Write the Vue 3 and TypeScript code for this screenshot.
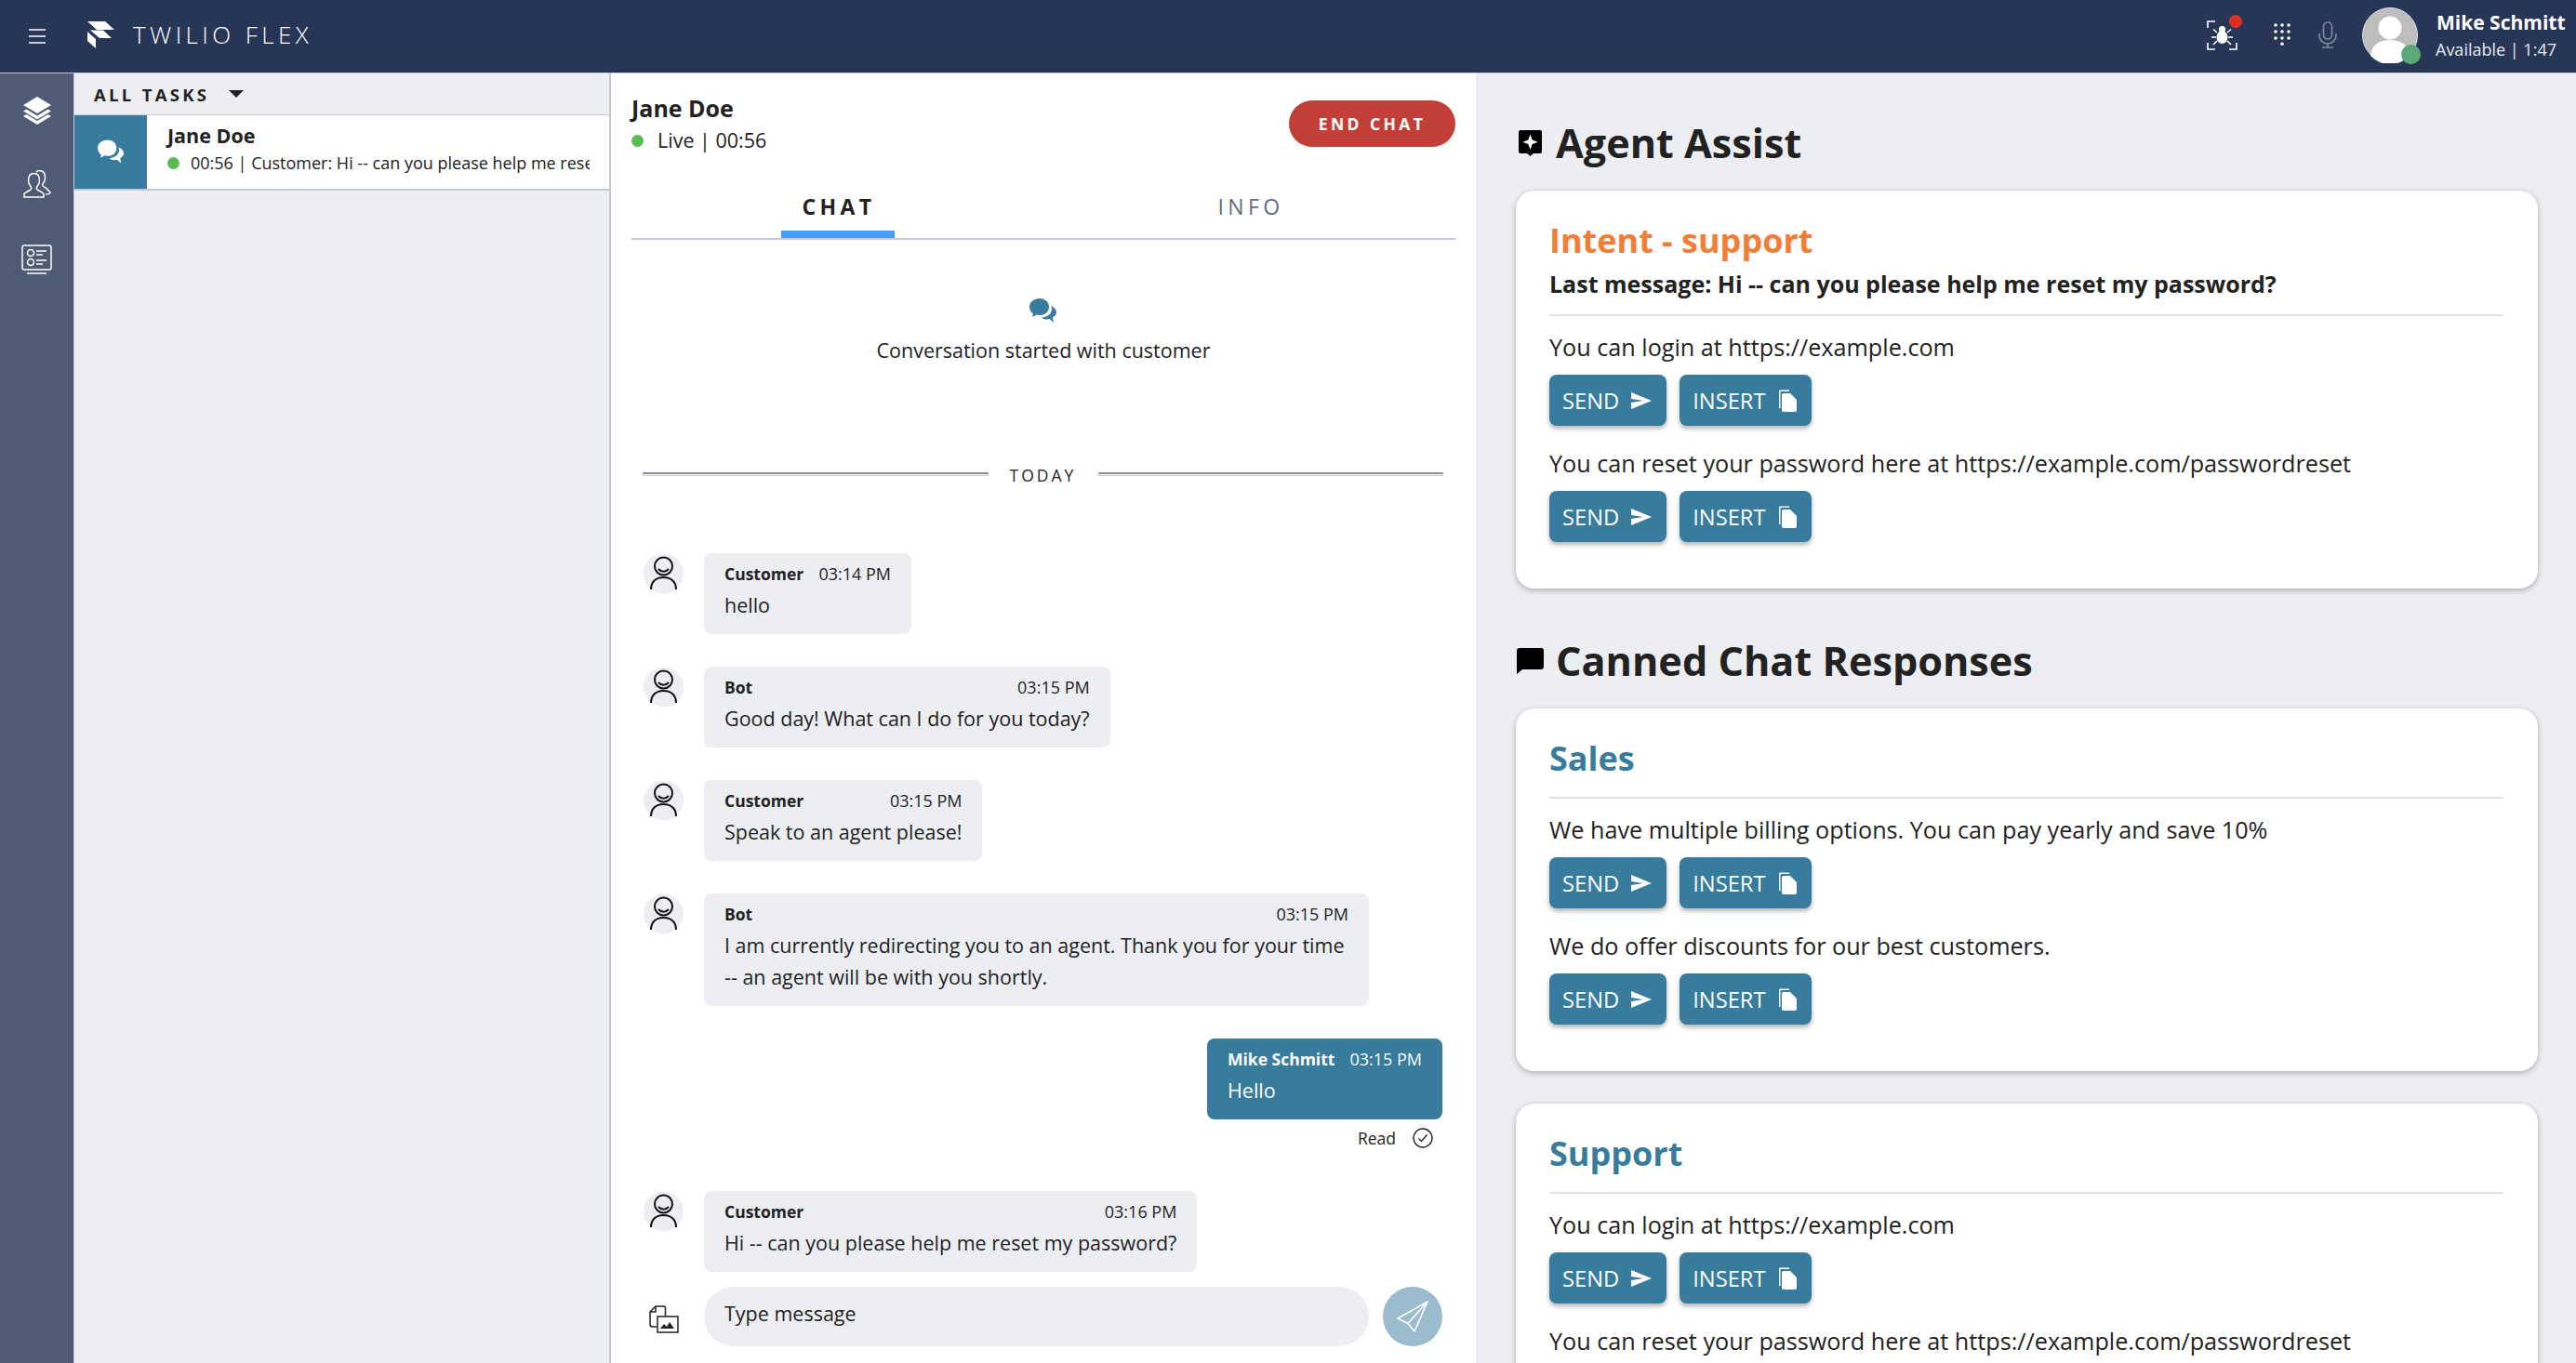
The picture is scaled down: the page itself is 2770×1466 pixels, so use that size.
<script setup lang="ts">
interface Msg { who: string; time: string; lines: string[]; gap: number; wide?: number }
interface Section { title: string; intent?: boolean; last?: string; items: string[] }

const messages: Msg[] = [
  { who: 'Customer', time: '03:14 PM', lines: ['hello'], gap: 0, wide: 223 },
  { who: 'Bot', time: '03:15 PM', lines: ['Good day! What can I do for you today?'], gap: 35 },
  { who: 'Customer', time: '03:15 PM', lines: ['Speak to an agent please!'], gap: 35 },
  { who: 'Bot', time: '03:15 PM', lines: ['I am currently redirecting you to an agent. Thank you for your time', '-- an agent will be with you shortly.'], gap: 35, wide: 715 },
]

const assist: Section[] = [
  {
    title: 'Intent - support',
    intent: true,
    last: 'Last message: Hi -- can you please help me reset my password?',
    items: ['You can login at https://example.com', 'You can reset your password here at https://example.com/passwordreset'],
  },
]
const canned: Section[] = [
  { title: 'Sales', items: ['We have multiple billing options. You can pay yearly and save 10%', 'We do offer discounts for our best customers.'] },
  { title: 'Support', items: ['You can login at https://example.com', 'You can reset your password here at https://example.com/passwordreset'] },
]
const groups = [
  { name: 'Agent Assist', icon: 'assist', sections: assist },
  { name: 'Canned Chat Responses', icon: 'canned', sections: canned },
]
</script>

<template>
  <div class="app">
    <header class="topbar">
      <svg class="burger" viewBox="0 0 18 16" width="18" height="16"><path d="M0 1h18M0 8h18M0 15h18" stroke="#fff" stroke-width="1.6" /></svg>
      <svg class="logo" viewBox="0 0 29 29" width="29" height="29">
        <path d="M0 0h19l10 9H12l-2 0z M3 9.5h14l9 8.5H13z M0 11l9 8v10l-9-8z" fill="#fff" />
      </svg>
      <span class="brand">TWILIO FLEX</span>
      <div class="spacer"></div>
      <div class="bug">
        <svg viewBox="0 0 33 32" width="33" height="32">
          <path d="M1 8V1h8M24 1h8v7M1 24v7h8M24 31h8v-7" fill="none" stroke="#fff" stroke-width="1.6" />
          <circle cx="16.5" cy="9.5" r="3.6" fill="#fff" />
          <ellipse cx="16.5" cy="18" rx="6" ry="7" fill="#fff" />
          <path d="M11 13L7 9.5M22 13l4-3.500M10 18H5M23 18h5M11 22l-4 4M22 22l4 4" stroke="#fff" stroke-width="1.6" fill="none" />
        </svg>
        <span class="bug-dot"></span>
      </div>
      <svg class="dial" viewBox="0 0 18 24" width="18" height="24" fill="#fff">
        <circle cx="2" cy="2" r="1.800" /><circle cx="9" cy="2" r="1.800" /><circle cx="16" cy="2" r="1.800" />
        <circle cx="2" cy="9" r="1.800" /><circle cx="9" cy="9" r="1.800" /><circle cx="16" cy="9" r="1.800" />
        <circle cx="2" cy="16" r="1.800" /><circle cx="9" cy="16" r="1.800" /><circle cx="16" cy="16" r="1.800" />
        <circle cx="9" cy="22.200" r="1.800" />
      </svg>
      <svg class="mic" viewBox="0 0 20 29" width="20" height="29" fill="none" stroke="#7e89a3" stroke-width="1.600">
        <rect x="5.500" y="1" width="9" height="18" rx="4.500" />
        <path d="M1 13v2a9 9 0 0 0 18 0v-2M10 24v4M4 28h12" />
      </svg>
      <div class="avatar">
        <svg viewBox="0 0 60 60" width="60" height="60">
          <circle cx="30" cy="30" r="29.500" fill="#bdbdbd" stroke="#dfe1e8" stroke-width="1" />
          <circle cx="30" cy="22" r="12.500" fill="#fff" />
          <path d="M9 52c1-12 10-17 21-17s20 5 21 17a29 29 0 0 1-42 0z" fill="#fff" />
        </svg>
        <span class="avatar-dot"></span>
      </div>
      <div class="who">
        <div class="who-name">Mike Schmitt</div>
        <div class="who-status">Available | 1:47</div>
      </div>
    </header>

    <div class="main">
      <nav class="rail">
        <svg class="rail-a" viewBox="0 0 30 30" width="30" height="30" fill="#fff">
          <path d="M15 0l15 9-15 9L0 9z" />
          <path d="M3.500 13.500L15 20.500l11.500-7L30 15.500 15 24.500 0 15.500z" />
          <path d="M3.500 19L15 26l11.500-7L30 21 15 30 0 21z" />
        </svg>
        <svg class="rail-b" viewBox="0 0 30 30" width="30" height="30" fill="none" stroke="#fff" stroke-width="1.500">
          <path d="M1 29v-3c0-2 5-3.500 7-5 1-1 1-2 0-3.500-2-2-2.500-4-2.500-6.500C5.500 6 8 3.500 11.500 3.500S17.500 6 17.500 11c0 2.500-.5 4.500-2.500 6.500-1 1.500-1 2.500 0 3.500 2 1.500 7 3 7 5v3z" />
          <path d="M14 2c1-1 2-1.500 3.500-1.500 4 0 6 3 6 7.500 0 2.500-.5 4.500-2 6-1 1.500-1 2.500 0 3.500 1.500 1 5 2 5 4 1 1 2.500 1.500 2.500 3-.5 1-3 1.500-5 1.500" />
        </svg>
        <svg class="rail-c" viewBox="0 0 33 32" width="33" height="32" fill="none" stroke="#fff" stroke-width="1.500">
          <rect x="1" y="1" width="31" height="26" rx="2" />
          <circle cx="10" cy="9" r="3.500" /><circle cx="10" cy="19" r="3.500" />
          <path d="M16 7h11M16 11h7M16 17h11M16 21h7M6 31h21" />
        </svg>
      </nav>

      <aside class="tasks">
        <div class="tasks-head">
          <span class="tasks-title">ALL TASKS</span>
          <span class="caret"></span>
        </div>
        <div class="task">
          <div class="task-icon">
            <svg viewBox="0 0 30 27" width="29" height="27" fill="#fff">
              <path d="M11 0C5 0 0 4 0 9c0 3 1.500 5.500 4 7.500L3 20l5-2.500c1 .300 2 .500 3 .500 6 0 10-4 10-9s-4-9-10-9z" />
              <path d="M23 8c.500 1 1 2 1 3 0 6-5 9-11 9.500 1.500 1.500 3.500 2 5.500 2 1 0 2-.200 3-.500l4.500 4-1-5.500c2.500-1.500 4-3.500 4-6s-2.500-5-6-6.500z" />
            </svg>
          </div>
          <div class="task-text">
            <div class="task-name">Jane Doe</div>
            <div class="task-line"><span class="dot"></span><span class="task-msg">00:56 | Customer: Hi -- can you please help me reset my password?</span></div>
          </div>
        </div>
      </aside>

      <section class="chat">
        <div class="chat-head">
          <div>
            <div class="chat-name">Jane Doe</div>
            <div class="chat-live"><span class="dot"></span>Live | 00:56</div>
          </div>
          <button class="end">END CHAT</button>
        </div>
        <div class="tabs">
          <div class="tab"><span class="tab-on">CHAT</span></div>
          <div class="tab"><span class="tab-off">INFO</span></div>
        </div>

        <div class="scroll">
          <div class="started">
            <svg viewBox="0 0 30 27" width="30" height="27" fill="#377c9c">
              <path d="M11 0C5 0 0 4 0 9c0 3 1.500 5.500 4 7.500L3 20l5-2.500c1 .300 2 .500 3 .500 6 0 10-4 10-9s-4-9-10-9z" />
              <path d="M23 8c.500 1 1 2 1 3 0 6-5 9-11 9.500 1.500 1.500 3.500 2 5.500 2 1 0 2-.200 3-.500l4.500 4-1-5.500c2.500-1.500 4-3.500 4-6s-2.500-5-6-6.500z" />
            </svg>
            <div class="started-text">Conversation started with customer</div>
          </div>
          <div class="today"><span class="rule"></span><span class="today-text">TODAY</span><span class="rule"></span></div>

          <div v-for="(m, i) in messages" :key="i" class="msg" :style="{ marginTop: m.gap + 'px' }">
            <svg class="person" viewBox="0 0 43 44" width="43" height="44">
              <circle cx="21.500" cy="22" r="21.500" fill="#eceef2" />
              <g fill="none" stroke="#111" stroke-width="2">
                <circle cx="21.500" cy="14" r="9.500" />
                <path d="M16 17c3 3.500 8 3.500 11 0" />
                <path d="M8 39c0-8 5-13 13.500-13S35 31 35 39" />
              </g>
            </svg>
            <div class="bubble" :style="m.wide ? { width: m.wide + 'px' } : {}">
              <div class="bubble-top"><b>{{ m.who }}</b><span>{{ m.time }}</span></div>
              <div class="bubble-body"><div v-for="l in m.lines" :key="l">{{ l }}</div></div>
            </div>
          </div>

          <div class="mine">
            <div class="bubble own">
              <div class="bubble-top"><b>Mike Schmitt</b><span>03:15 PM</span></div>
              <div class="bubble-body">Hello</div>
            </div>
            <div class="read">
              <span>Read</span>
              <svg viewBox="0 0 22 22" width="22" height="22" fill="none" stroke="#222" stroke-width="1.400"><circle cx="11" cy="11" r="10" /><path d="M6.500 11.500l3 3 6-7" /></svg>
            </div>
          </div>

          <div class="msg last">
            <svg class="person" viewBox="0 0 43 44" width="43" height="44">
              <circle cx="21.500" cy="22" r="21.500" fill="#eceef2" />
              <g fill="none" stroke="#111" stroke-width="2">
                <circle cx="21.500" cy="14" r="9.500" />
                <path d="M16 17c3 3.500 8 3.500 11 0" />
                <path d="M8 39c0-8 5-13 13.500-13S35 31 35 39" />
              </g>
            </svg>
            <div class="bubble">
              <div class="bubble-top"><b>Customer</b><span>03:16 PM</span></div>
              <div class="bubble-body">Hi -- can you please help me reset my password?</div>
            </div>
          </div>
        </div>

        <div class="composer">
          <svg class="attach" viewBox="0 0 32 30" width="32" height="30" fill="none" stroke="#222" stroke-width="1.500">
            <path d="M8 23H3.500C2 23 1 22 1 20.500V7l6-6h9c1 0 1.500.500 1.500 1.500V12" />
            <path d="M1 7h6V1" />
            <rect x="9" y="12" width="22" height="17" />
            <path d="M12 25l4-5 3 3 3-5 5 7z" fill="#222" stroke="none" />
          </svg>
          <div class="input">Type message</div>
          <div class="send-round">
            <svg viewBox="0 0 34 34" width="34" height="34" fill="none" stroke="#fff" stroke-width="1.600" stroke-linejoin="round">
              <path d="M33 1L1 19l11 5.500L19 33z" />
              <path d="M33 1L12 24.500" />
            </svg>
          </div>
        </div>
      </section>

      <section class="panel">
        <template v-for="g in groups" :key="g.name">
          <h1 class="group">
            <svg v-if="g.icon === 'assist'" class="g-assist" viewBox="0 0 25 28" width="25" height="28">
              <path d="M2 0h21a2 2 0 0 1 2 2v21a2 2 0 0 1-2 2h-7l-3.500 3L9 25H2a2 2 0 0 1-2-2V2a2 2 0 0 1 2-2z" fill="#000" />
              <path d="M12.500 4.500l2.200 6 6 2.200-6 2.200-2.200 6-2.200-6-6-2.200 6-2.200z" fill="#fff" />
            </svg>
            <svg v-else class="g-canned" viewBox="0 0 29 28" width="29" height="28">
              <path d="M3 0h23a3 3 0 0 1 3 3v17a3 3 0 0 1-3 3H6l-6 5V3a3 3 0 0 1 3-3z" fill="#000" />
            </svg>
            <span>{{ g.name }}</span>
          </h1>
          <article v-for="s in g.sections" :key="s.title" class="card">
            <h2 class="card-title" :class="{ intent: s.intent }">{{ s.title }}</h2>
            <div v-if="s.last" class="card-last">{{ s.last }}</div>
            <hr class="card-rule" />
            <div v-for="it in s.items" :key="it" class="reply">
              <div class="reply-text">{{ it }}</div>
              <div class="reply-btns">
                <button class="act">SEND
                  <svg viewBox="0 0 22 18" width="22" height="18" fill="#fff"><path d="M0 0l22 9L0 18v-7l13-2L0 7z" /></svg>
                </button>
                <button class="act">INSERT
                  <svg viewBox="0 0 21 24" width="21" height="24" fill="#fff">
                    <path d="M2 20V2c0-1 .500-1.500 1.500-1.500H13v1.500H3.500V20z" />
                    <path d="M7 4h7l7 7v11c0 1-.700 2-2 2H7c-1.300 0-2-1-2-2V6c0-1 .700-2 2-2z" />
                  </svg>
                </button>
              </div>
            </div>
          </article>
        </template>
      </section>
    </div>
  </div>
</template>

<style>
html, body { margin: 0; height: 100%; overflow: hidden; background: #eceef2; }
</style>

<style scoped>
.app {
  height: 1466px;
  display: flex;
  flex-direction: column;
  overflow: hidden;
  font-family: "Open Sans", "Liberation Sans", sans-serif;
  color: #222;
}
.topbar {
  height: 79px;
  flex: none;
  box-sizing: border-box;
  background: #273657;
  display: flex;
  align-items: center;
  color: #fff;
  padding-left: 31px;
  border-bottom: 1px solid #c5c8d6;
}
.burger { flex: none; }
.logo { margin-left: 45px; margin-top: -3px; }
.brand {
  margin-left: 20px;
  font-size: 26px;
  font-weight: 300;
  letter-spacing: 4.4px;
  margin-top: -4px;
}
.spacer { flex: 1; }
.bug { position: relative; width: 33px; height: 32px; margin-top: -3px; }
.bug svg { display: block; }
.bug-dot {
  position: absolute;
  right: -5px;
  top: -6px;
  width: 14px;
  height: 14px;
  border-radius: 50%;
  background: #dd2e26;
}
.dial { margin-left: 39px; margin-top: -4px; margin-right: -2px; }
.mic { margin-left: 32px; margin-top: -4px; }
.avatar { position: relative; width: 60px; height: 60px; margin-left: 27px; margin-top: -2px; }
.avatar svg { display: block; }
.avatar-dot {
  position: absolute;
  right: -3px;
  bottom: -1px;
  width: 21px;
  height: 21px;
  border-radius: 50%;
  background: #5aa976;
}
.who { margin-left: 20px; width: 150px; margin-top: -1px; }
.who-name { font-size: 21px; font-weight: 700; line-height: 26px; white-space: nowrap; }
.who-status { font-size: 18px; line-height: 26px; margin-top: 3px; color: #e8eaf0; white-space: nowrap; margin-left: -1px; }

.main { flex: 1; display: flex; min-height: 0; }
.rail {
  width: 80px;
  flex: none;
  box-sizing: border-box;
  background: #4f5a75;
  border-right: 1px solid #c5c8d6;
  display: flex;
  flex-direction: column;
  align-items: center;
}
.rail-a { margin-top: 25px; }
.rail-b { margin-top: 49px; }
.rail-c { margin-top: 50px; }

.tasks {
  width: 577px;
  flex: none;
  box-sizing: border-box;
  background: #eceef2;
  border-right: 2px solid #c5c8d6;
}
.tasks-head {
  height: 45px;
  display: flex;
  align-items: center;
  padding-left: 21px;
  box-sizing: border-box;
  border-bottom: 1px solid #c5c8d6;
}
.tasks-title { font-size: 18.500px; font-weight: 700; letter-spacing: 3.300px; }
.caret {
  margin-left: 21px;
  width: 0;
  height: 0;
  border-left: 8px solid transparent;
  border-right: 8px solid transparent;
  border-top: 8px solid #222;
}
.task {
  height: 81px;
  box-sizing: border-box;
  background: #fff;
  border-bottom: 2px solid #c5c8d6;
  display: flex;
}
.task-icon {
  width: 78px;
  flex: none;
  background: #377c9c;
  display: flex;
  align-items: center;
  justify-content: center;
}
.task-text { padding-left: 22px; min-width: 0; width: 454px; }
.task-name { font-size: 21.500px; font-weight: 700; line-height: 28px; margin-top: 8px; }
.task-line { display: flex; align-items: center; font-size: 18px; line-height: 26px; margin-top: 2px; }
.task-msg { margin-left: 12px; white-space: nowrap; overflow: hidden; flex: 1; min-width: 0; }
.dot { width: 13px; height: 13px; border-radius: 50%; background: #5abb52; flex: none; }

.chat {
  width: 930px;
  flex: none;
  box-sizing: border-box;
  background: #fff;
  padding: 0 22px 0 22px;
  display: flex;
  flex-direction: column;
}
.chat-head {
  height: 120px;
  flex: none;
  box-sizing: border-box;
  padding-top: 29px;
  display: flex;
  justify-content: space-between;
  align-items: flex-start;
}
.chat-name { font-size: 25px; font-weight: 700; line-height: 32px; margin-top: -8px; }
.chat-live { display: flex; align-items: center; font-size: 21.500px; line-height: 30px; margin-top: 4px; }
.chat-live .dot { margin-right: 15px; }
.end {
  width: 179px;
  height: 50px;
  border: 0;
  border-radius: 25px;
  background: #c23f38;
  color: #fff;
  font-family: inherit;
  font-size: 17.500px;
  font-weight: 700;
  letter-spacing: 3.400px;
  padding: 0;
}
.tabs {
  height: 59px;
  flex: none;
  box-sizing: border-box;
  display: grid;
  grid-template-columns: 1fr 1fr;
  border-bottom: 2px solid #c5c8d6;
}
.tab { display: flex; justify-content: center; }
.tab-on {
  width: 122px;
  height: 57px;
  box-sizing: border-box;
  text-align: center;
  border-bottom: 8px solid #3f9df5;
  padding-left: 3px;
  font-size: 23px;
  font-weight: 700;
  letter-spacing: 4.400px;
  line-height: 47px;
}
.tab-off {
  padding-left: 3px;
  font-size: 23px;
  letter-spacing: 4.400px;
  line-height: 47px;
  color: #656a80;
  font-weight: 400;
}
.scroll { flex: 1; min-height: 0; overflow: hidden; }
.started {
  display: flex;
  flex-direction: column;
  align-items: center;
  padding-top: 63px;
}
.started svg { display: block; }
.started-text { font-size: 21.500px; line-height: 30px; margin-top: 14px; }
.today {
  display: flex;
  align-items: center;
  margin: 104px 13px 0 12px;
  height: 30px;
}
.rule {
  flex: 1;
  height: 4px;
  box-sizing: border-box;
  border: 1px solid #c5c8d6;
  border-top: 2px solid #8b8d98;
  margin-top: -2px;
}
.today-text { font-size: 17.500px; letter-spacing: 3px; width: 118px; text-align: center; }
.msg { display: flex; align-items: flex-start; padding-left: 13px; }
.scroll > .today + .msg { margin-top: 69px !important; }
.person { flex: none; display: block; }
.bubble {
  margin-left: 22px;
  box-sizing: border-box;
  background: #eceef2;
  border-radius: 8px;
  padding: 9px 22px 0;
}
.bubble-top {
  display: flex;
  justify-content: space-between;
  font-size: 18px;
  line-height: 26px;
  gap: 14px;
  white-space: nowrap;
}
.bubble-top b { font-weight: 700; font-size: 17.500px; }
.bubble-body { font-size: 21.500px; line-height: 34px; margin-top: 4px; padding-bottom: 14px; white-space: nowrap; }
.mine { margin-top: 35px; display: flex; flex-direction: column; align-items: flex-end; padding-right: 14px; }
.own { background: #377c9c; color: #fff; margin: 0; }
.own .bubble-top { gap: 16px; }
.read {
  display: flex;
  align-items: center;
  font-size: 17.500px;
  line-height: 24px;
  height: 22px;
  margin-top: 9px;
  padding-right: 10px;
  gap: 18px;
}
.last { margin-top: 46px; }
.composer {
  flex: none;
  height: 64px;
  margin-bottom: 18px;
  padding: 0 13px 0 13px;
  display: flex;
  align-items: center;
}
.attach { margin-left: 6px; margin-top: 5px; margin-right: -1px; }
.input {
  margin-left: 28px;
  width: 715px;
  height: 64px;
  box-sizing: border-box;
  background: #eceef2;
  border-radius: 32px;
  padding-left: 22px;
  font-size: 21.500px;
  line-height: 58px;
}
.send-round {
  margin-left: 15px;
  width: 64px;
  height: 64px;
  border-radius: 50%;
  background: #9bbccd;
  display: flex;
  align-items: center;
  justify-content: center;
}
.panel {
  flex: 1;
  min-width: 0;
  overflow: hidden;
  padding: 47px 41px 0 43px;
}
.group {
  margin: 50px 0 23px;
  height: 56px;
  display: flex;
  align-items: center;
  font-size: 43.200px;
  font-weight: 700;
  line-height: 56px;
  white-space: nowrap;
}
.group:first-child { margin-top: 0; }
.g-assist { margin: 0 15px 0 3px; flex: none; }
.g-canned { margin: 0 13px 0 1px; flex: none; }
.card {
  background: #fff;
  border-radius: 20px;
  padding: 31px 37px 50px 36px;
  box-shadow: 0 2px 6px rgba(0, 0, 0, 0.28);
  margin-bottom: 35px;
}
.card-title {
  margin: 0;
  font-size: 36px;
  font-weight: 700;
  line-height: 46px;
  color: #377c9c;
}
.card-title.intent { color: #f47c34; }
.card-last { font-size: 25px; font-weight: 700; line-height: 34px; margin-top: 6px; }
.card-rule { margin: 16px 0 0; border: 0; height: 2px; background: #e0e1e4; }
.card-title + .card-rule { margin-top: 18px; }
.reply { margin-top: 23px; }
.card-rule + .reply { margin-top: 16px; }
.reply-text { font-size: 25.200px; line-height: 34px; }
.reply-btns { display: flex; gap: 14px; margin-top: 13px; }
.act {
  height: 55px;
  border: 0;
  border-radius: 8px;
  background: #377c9c;
  color: #fff;
  font-family: inherit;
  font-size: 23.700px;
  padding: 0 16px 0 14px;
  display: flex;
  align-items: center;
  gap: 13px;
  box-shadow: 0 3px 5px rgba(0, 0, 0, 0.3);
}
</style>
